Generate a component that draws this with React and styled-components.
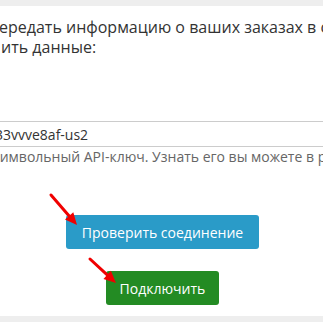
import React from "react";
import styled, { createGlobalStyle } from "styled-components";

const GlobalStyle = createGlobalStyle`
  html, body {
    margin: 0;
    padding: 0;
    background: #fff;
  }
  body {
    font-family: "Open Sans", "Liberation Sans", sans-serif;
  }
`;

const Page = styled.div`
  position: relative;
  width: 323px;
  height: 322px;
  overflow: hidden;
  background: #fff;
  display: flex;
  flex-direction: column;
`;

const Band = styled.div`
  height: ${(p) => p.h}px;
  background: #eeeeee;
  flex-shrink: 0;
`;

const Panel = styled.div`
  flex: 1;
  display: flex;
  flex-direction: column;
  padding-top: 12px;
`;

const Intro = styled.div`
  font-size: 16px;
  line-height: 19.5px;
  color: #333;
  white-space: nowrap;
`;

const Line = styled.div`
  margin-left: ${(p) => p.shift || 0}px;
`;

const Field = styled.div`
  margin: 64px -20px 0 -30px;
`;

const KeyInput = styled.input`
  box-sizing: border-box;
  width: 100%;
  height: 26px;
  padding: 0 0 0 24px;
  border: 1px solid #cccccc;
  border-radius: 0;
  font-family: "Open Sans", "Liberation Sans", sans-serif;
  font-size: 14px;
  color: #333;
  background: #fff;
  outline: none;
`;

const Hint = styled.div`
  font-size: 14px;
  line-height: 20px;
  color: #666;
  white-space: nowrap;
  margin-left: -7px;
`;

const Actions = styled.div`
  display: flex;
  flex-direction: column;
  align-items: center;
  gap: 22px;
  margin-top: 48px;
  padding-left: 2px;
`;

const Button = styled.button`
  height: 34px;
  padding: 0 ${(p) => p.pad}px;
  border: none;
  border-radius: 3px;
  background: ${(p) => p.bg};
  color: #fff;
  font-family: "Open Sans", "Liberation Sans", sans-serif;
  font-size: 14px;
  cursor: pointer;
`;

const Overlay = styled.svg`
  position: absolute;
  left: 0;
  top: 0;
  pointer-events: none;
`;

const Arrow = ({ x1, y1, x2, y2 }) => {
  const dx = x2 - x1;
  const dy = y2 - y1;
  const len = Math.hypot(dx, dy);
  const ux = dx / len;
  const uy = dy / len;
  const head = 12;
  const half = 5.5;
  const bx = x2 - ux * head;
  const by = y2 - uy * head;
  const pts = [
    `${x2},${y2}`,
    `${bx - uy * half},${by + ux * half}`,
    `${bx + uy * half},${by - ux * half}`,
  ].join(" ");
  return (
    <g>
      <line x1={x1} y1={y1} x2={bx} y2={by} stroke="#f00000" strokeWidth="3" strokeLinecap="round" />
      <polygon points={pts} fill="#f00000" />
    </g>
  );
};

const App = () => (
  <>
    <GlobalStyle />
    <Page>
      <Band h={6} />
      <Panel>
        <Intro>
          <Line shift={-1}>ередать информацию о ваших заказах в сервис</Line>
          <Line shift={1}>ить данные:</Line>
        </Intro>
        <Field>
          <KeyInput readOnly defaultValue="33vvve8af-us2" />
        </Field>
        <Hint>символьный API-ключ. Узнать его вы можете в разделе</Hint>
        <Actions>
          <Button bg="#2a9bc8" pad={16}>Проверить соединение</Button>
          <Button bg="#238b23" pad={14}>Подключить</Button>
        </Actions>
      </Panel>
      <Band h={6} />
      <Overlay width="323" height="322">
        <Arrow x1={51} y1={195} x2={77} y2={225} />
        <Arrow x1={90} y1={259} x2={116} y2={283} />
      </Overlay>
    </Page>
  </>
);

export default App;
